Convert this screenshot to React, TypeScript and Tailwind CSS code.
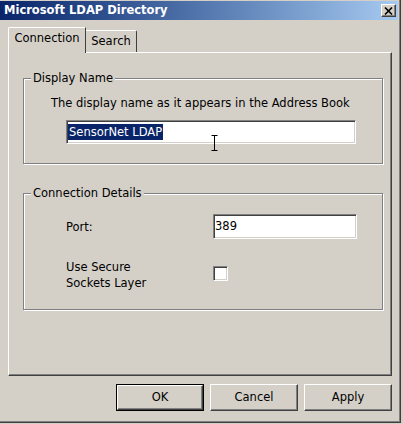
import React from "react";

const font = { fontFamily: '"DejaVu Sans", Verdana, sans-serif' };

function Sunken({ className = "", children }: { className?: string; children?: React.ReactNode }) {
  return (
    <div
      className={`bg-white border-t border-l border-[#808080] border-r border-b border-r-white border-b-white shadow-[inset_1px_1px_0_#404040,inset_-1px_-1px_0_#d4d0c8] ${className}`}
    >
      {children}
    </div>
  );
}

function Button({ label, isDefault = false }: { label: string; isDefault?: boolean }) {
  return (
    <div className={`w-[88px] h-[27px] ${isDefault ? "border border-black" : ""}`}>
      <div className="w-full h-full flex items-center justify-center bg-[#d4d0c8] border-t border-l border-white border-r border-b border-r-[#404040] border-b-[#404040] shadow-[inset_-1px_-1px_0_#808080] text-[11.5px] text-black">
        {label}
      </div>
    </div>
  );
}

function Group({ title, className = "", children }: { title: string; className?: string; children?: React.ReactNode }) {
  return (
    <div
      className={`relative border border-[#808080] shadow-[inset_1px_1px_0_#fff,1px_1px_0_#fff] ${className}`}
    >
      <div className="absolute left-[7px] -top-[8px] px-[2px] bg-[#d4d0c8] text-[11.5px] leading-[14px] text-black">
        {title}
      </div>
      {children}
    </div>
  );
}

export default function App() {
  return (
    <div className="w-[403px] h-[424px] bg-[#d4d0c8] overflow-hidden" style={font}>
      <div className="w-[401px] h-[423px] flex flex-col bg-[#d4d0c8] border-r border-b border-[#404040] shadow-[inset_-1px_-1px_0_#808080]">
        {/* Title bar */}
        <div className="h-[19px] mt-px mr-[2px] flex items-center justify-between bg-linear-to-r from-[#0a246a] to-[#a6caf0] pl-[4px] pr-[2px]">
          <span className="text-white font-bold text-[11.5px] leading-none">Microsoft LDAP Directory</span>
          <div className="w-[15px] h-[13px] flex items-center justify-center bg-[#d4d0c8] border-t border-l border-white border-r border-b border-r-[#404040] border-b-[#404040] shadow-[inset_-1px_-1px_0_#808080]">
            <svg width="9" height="8" viewBox="0 0 9 8">
              <path d="M1 0.5 L8 7.5 M8 0.5 L1 7.5" stroke="#000" strokeWidth="1.6" />
            </svg>
          </div>
        </div>

        {/* Tabs */}
        <div className="mt-[7px] ml-[8px] h-[25px] flex items-end">
          <div className="relative z-10 w-[78px] h-[26px] -mb-px bg-[#d4d0c8] border-t border-l border-white border-r border-r-[#404040] rounded-tl-[2px] flex items-center justify-center pb-[3px] text-[11.5px] text-black">
            Connection
          </div>
          <div className="w-[51px] h-[22px] bg-[#d4d0c8] border-t border-white border-r border-r-[#404040] rounded-tr-[2px] flex items-center justify-center text-[11.5px] text-black">
            Search
          </div>
        </div>

        {/* Panel */}
        <div className="ml-[8px] w-[384px] h-[324px] border-t border-l border-white border-r border-b border-r-[#404040] border-b-[#404040] shadow-[inset_-1px_-1px_0_#808080] pt-[25px] pl-[14px]">
          <Group title="Display Name" className="w-[360px] h-[86px]">
            <div className="flex flex-col">
              <div className="mt-[17px] ml-[27px] text-[11.5px] leading-[14px] text-black">
                The display name as it appears in the Address Book
              </div>
              <div className="relative mt-[10px] ml-[42px]">
                <Sunken className="w-[290px] h-[24px] flex items-center pl-[1px]">
                  <span className="bg-[#0a246a] text-white text-[11.5px] leading-[16px] px-px">SensorNet LDAP</span>
                </Sunken>
                <svg className="absolute left-[145px] top-[15px]" width="7" height="16" viewBox="0 0 7 16">
                  <path d="M0.5 0.5 H6.5 M3.5 0.5 V15.5 M0.5 15.5 H6.5" stroke="#000" strokeWidth="1" fill="none" />
                </svg>
              </div>
            </div>
          </Group>

          <Group title="Connection Details" className="mt-[29px] w-[360px] h-[117px]">
            <div className="flex flex-col pl-[42px]">
              <div className="mt-[20px] flex items-center">
                <div className="w-[147px] text-[11.5px] text-black pt-[3px]">Port:</div>
                <Sunken className="w-[144px] h-[25px] flex items-center pl-px">
                  <span className="text-[11.5px] text-black">389</span>
                </Sunken>
              </div>
              <div className="mt-[20px] flex items-start">
                <div className="w-[147px] text-[11.5px] leading-[16px] text-black">
                  Use Secure
                  <br />
                  Sockets Layer
                </div>
                <Sunken className="mt-[7px] w-[15px] h-[15px]" />
              </div>
            </div>
          </Group>
        </div>

        {/* Buttons */}
        <div className="mt-[8px] ml-[116px] flex gap-[6px]">
          <Button label="OK" isDefault />
          <Button label="Cancel" />
          <Button label="Apply" />
        </div>
      </div>
    </div>
  );
}
